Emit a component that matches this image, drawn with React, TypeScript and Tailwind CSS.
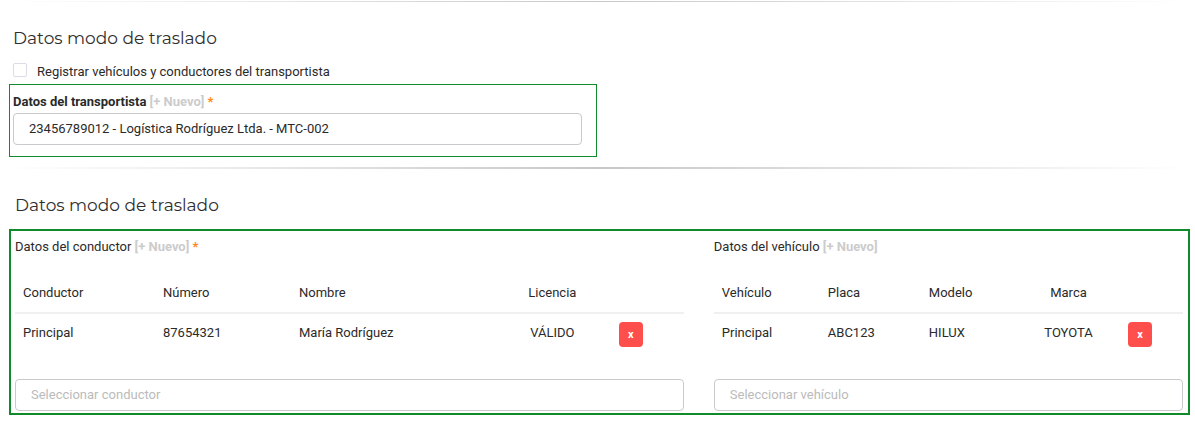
import React from 'react';

type Column = {
  label: string;
  width: string;
  centered?: boolean;
};

type TableProps = {
  columns: Column[];
  row: string[];
  actionWidth: string;
};

const driverColumns: Column[] = [
  { label: 'Conductor', width: 'w-[140px]' },
  { label: 'Número', width: 'w-[136px]' },
  { label: 'Nombre', width: 'w-auto' },
  { label: 'Licencia', width: 'w-[117px]', centered: true },
];

const vehicleColumns: Column[] = [
  { label: 'Vehículo', width: 'w-[106px]' },
  { label: 'Placa', width: 'w-[101px]' },
  { label: 'Modelo', width: 'w-auto' },
  { label: 'Marca', width: 'w-[103px]', centered: true },
];

const Divider = ({ className }: { className: string }) => (
  <hr className={`border-0 bg-linear-to-r from-transparent via-[#c8c8c8] to-transparent ${className}`} />
);

const Title = ({ className }: { className: string }) => (
  <h2 className={`font-[Montserrat,Inter,sans-serif] text-[17px] leading-6 font-normal text-[#2f2f2f] ${className}`}>
    Datos modo de traslado
  </h2>
);

const NewLink = () => (
  <a href="#" className="font-bold text-[#cccccc]">
    [+ Nuevo]
  </a>
);

const Required = () => <span className="font-bold text-[#ff8819]">*</span>;

const AssignmentTable = ({ columns, row, actionWidth }: TableProps) => (
  <table className="mt-[18px] w-full table-fixed">
    <thead>
      <tr className="border-b-2 border-[#f0f0f0]">
        {columns.map((column) => (
          <th
            key={column.label}
            className={`px-2 pt-2 pb-[9px] font-normal ${column.width} ${column.centered ? 'text-center' : 'text-left'}`}
          >
            {column.label}
          </th>
        ))}
        <td className={actionWidth}></td>
      </tr>
    </thead>
    <tbody>
      <tr className="align-top">
        {row.map((value, index) => (
          <td key={value} className={`px-2 pt-[9px] ${columns[index].centered ? 'text-center' : 'text-left'}`}>
            {value}
          </td>
        ))}
        <td className="p-2">
          <button
            type="button"
            className="block h-[25px] w-6 rounded bg-[#ff4f4d] text-center text-[11px] leading-6 font-bold text-white"
          >
            x
          </button>
        </td>
      </tr>
    </tbody>
  </table>
);

const selectStyle =
  'block h-8 w-full appearance-none rounded border border-[#cacace] bg-white px-[15px] text-[13px] leading-5';

const App = () => {
  return (
    <main className="bg-white pr-[5px] pl-[9px] font-[Roboto,sans-serif] text-[13px] leading-5 text-[#2a2a2a]">
      <Divider className="mt-px h-px" />

      <section>
        <Title className="mt-6 ml-1" />
        <label className="mt-3 ml-1 flex h-5 items-center gap-2.5">
          <input type="checkbox" className="mb-1 size-3.5 appearance-none rounded-xs border border-[#dcdce6]" />
          Registrar vehículos y conductores del transportista
        </label>

        <div className="mt-0.5 w-[49.8%] border border-[#118a2b] pt-[7px] pr-3.5 pb-[11px] pl-[3px]">
          <div className="font-bold">
            <label htmlFor="carrier">Datos del transportista</label> <NewLink /> <Required />
          </div>
          <select id="carrier" className={`mt-px ${selectStyle}`}>
            <option>23456789012 - Logística Rodríguez Ltda. - MTC-002</option>
          </select>
        </div>
      </section>

      <Divider className="mt-2.5 h-0.5" />

      <section>
        <Title className="mt-6 ml-1.5" />
        <div className="mt-3 grid grid-cols-12 gap-x-[30px] border-2 border-[#118a2b] pt-1.5 pr-[5px] pb-0.5 pl-1">
          <div className="col-span-7">
            <div>
              <label htmlFor="driver">Datos del conductor</label> <NewLink /> <Required />
            </div>
            <AssignmentTable
              columns={driverColumns}
              row={['Principal', '87654321', 'María Rodríguez', 'VÁLIDO']}
              actionWidth="w-[73px]"
            />
            <select id="driver" className={`mt-6 text-[#bbbbbb] ${selectStyle}`}>
              <option>Seleccionar conductor</option>
            </select>
          </div>

          <div className="col-span-5">
            <div>
              <label htmlFor="vehicle">Datos del vehículo</label> <NewLink />
            </div>
            <AssignmentTable
              columns={vehicleColumns}
              row={['Principal', 'ABC123', 'HILUX', 'TOYOTA']}
              actionWidth="w-[63px]"
            />
            <select id="vehicle" className={`mt-6 text-[#bbbbbb] ${selectStyle}`}>
              <option>Seleccionar vehículo</option>
            </select>
          </div>
        </div>
      </section>
    </main>
  );
};

export default App;
